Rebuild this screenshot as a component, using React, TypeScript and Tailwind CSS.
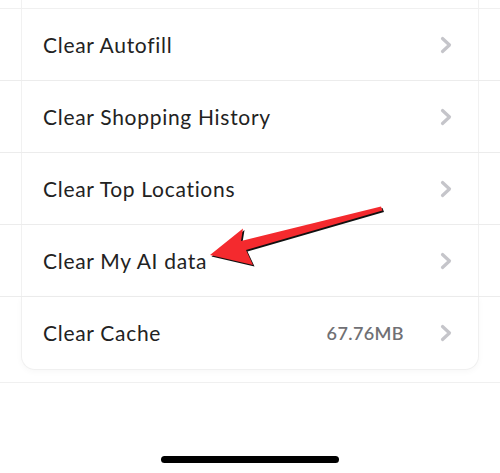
import React from 'react';

type Row = {
  label: string;
  value?: string;
};

const rows: Row[] = [
  { label: 'Clear Autofill' },
  { label: 'Clear Shopping History' },
  { label: 'Clear Top Locations' },
  { label: 'Clear My AI data' },
  { label: 'Clear Cache', value: '67.76MB' },
];

function Chevron() {
  return (
    <svg width="14" height="18" viewBox="0 0 14 18" className="shrink-0">
      <path
        d="M3.5 2.5 L10.5 9 L3.5 15.5"
        fill="none"
        stroke="#c5c5ca"
        strokeWidth="3.2"
        strokeLinecap="round"
        strokeLinejoin="round"
      />
    </svg>
  );
}

function Arrow() {
  return (
    <svg
      width="500"
      height="473"
      viewBox="0 0 500 473"
      className="absolute left-0 top-0 pointer-events-none"
    >
      <polygon
        points="211.5,256.5 244.5,230 242.5,242.5 382.5,208 384,212 247.5,251.5 254.5,266.5"
        fill="#111"
      />
      <polygon
        points="210,255 243,228.5 241,241 381,206.5 382.5,210.5 246,250 253,265"
        fill="#f42a2e"
      />
    </svg>
  );
}

export default function App() {
  return (
    <div
      className="relative w-[500px] h-[473px] overflow-hidden bg-white"
      style={{ fontFamily: 'Lato, "Noto Sans", sans-serif' }}
    >
      <div className="h-[9px] border-b border-[#f0f0f0]">
        <div className="mx-[21px] h-full bg-white border-x border-[#f1f1f1]" />
      </div>

      {rows.map((row, index) => {
        const last = index === rows.length - 1;
        return (
          <div
            key={row.label}
            className={last ? 'h-[86px] border-b border-[#f0f0f0]' : 'h-[72px] border-b border-[#ececec]'}
          >
            <div
              className={
                last
                  ? 'mx-[21px] h-[73px] flex items-center pl-[21px] pr-[25px] bg-white border-x border-b border-[#f0f0f0] rounded-b-[14px] shadow-[0_2px_6px_rgba(0,0,0,0.03)]'
                  : 'mx-[21px] h-full flex items-center pl-[21px] pr-[25px] bg-white border-x border-[#f1f1f1]'
              }
            >
              <span className="text-[21px] text-[#222] tracking-[0.7px]">{row.label}</span>
              <span className="ml-auto flex items-center">
                {row.value && (
                  <span className="mr-[35px] text-[18px] font-semibold text-[#707074] tracking-[0.4px]">{row.value}</span>
                )}
                <Chevron />
              </span>
            </div>
          </div>
        );
      })}

      <div className="flex justify-center pt-[73px]">
        <div className="w-[178px] h-[7px] rounded-full bg-black" />
      </div>

      <Arrow />
    </div>
  );
}
